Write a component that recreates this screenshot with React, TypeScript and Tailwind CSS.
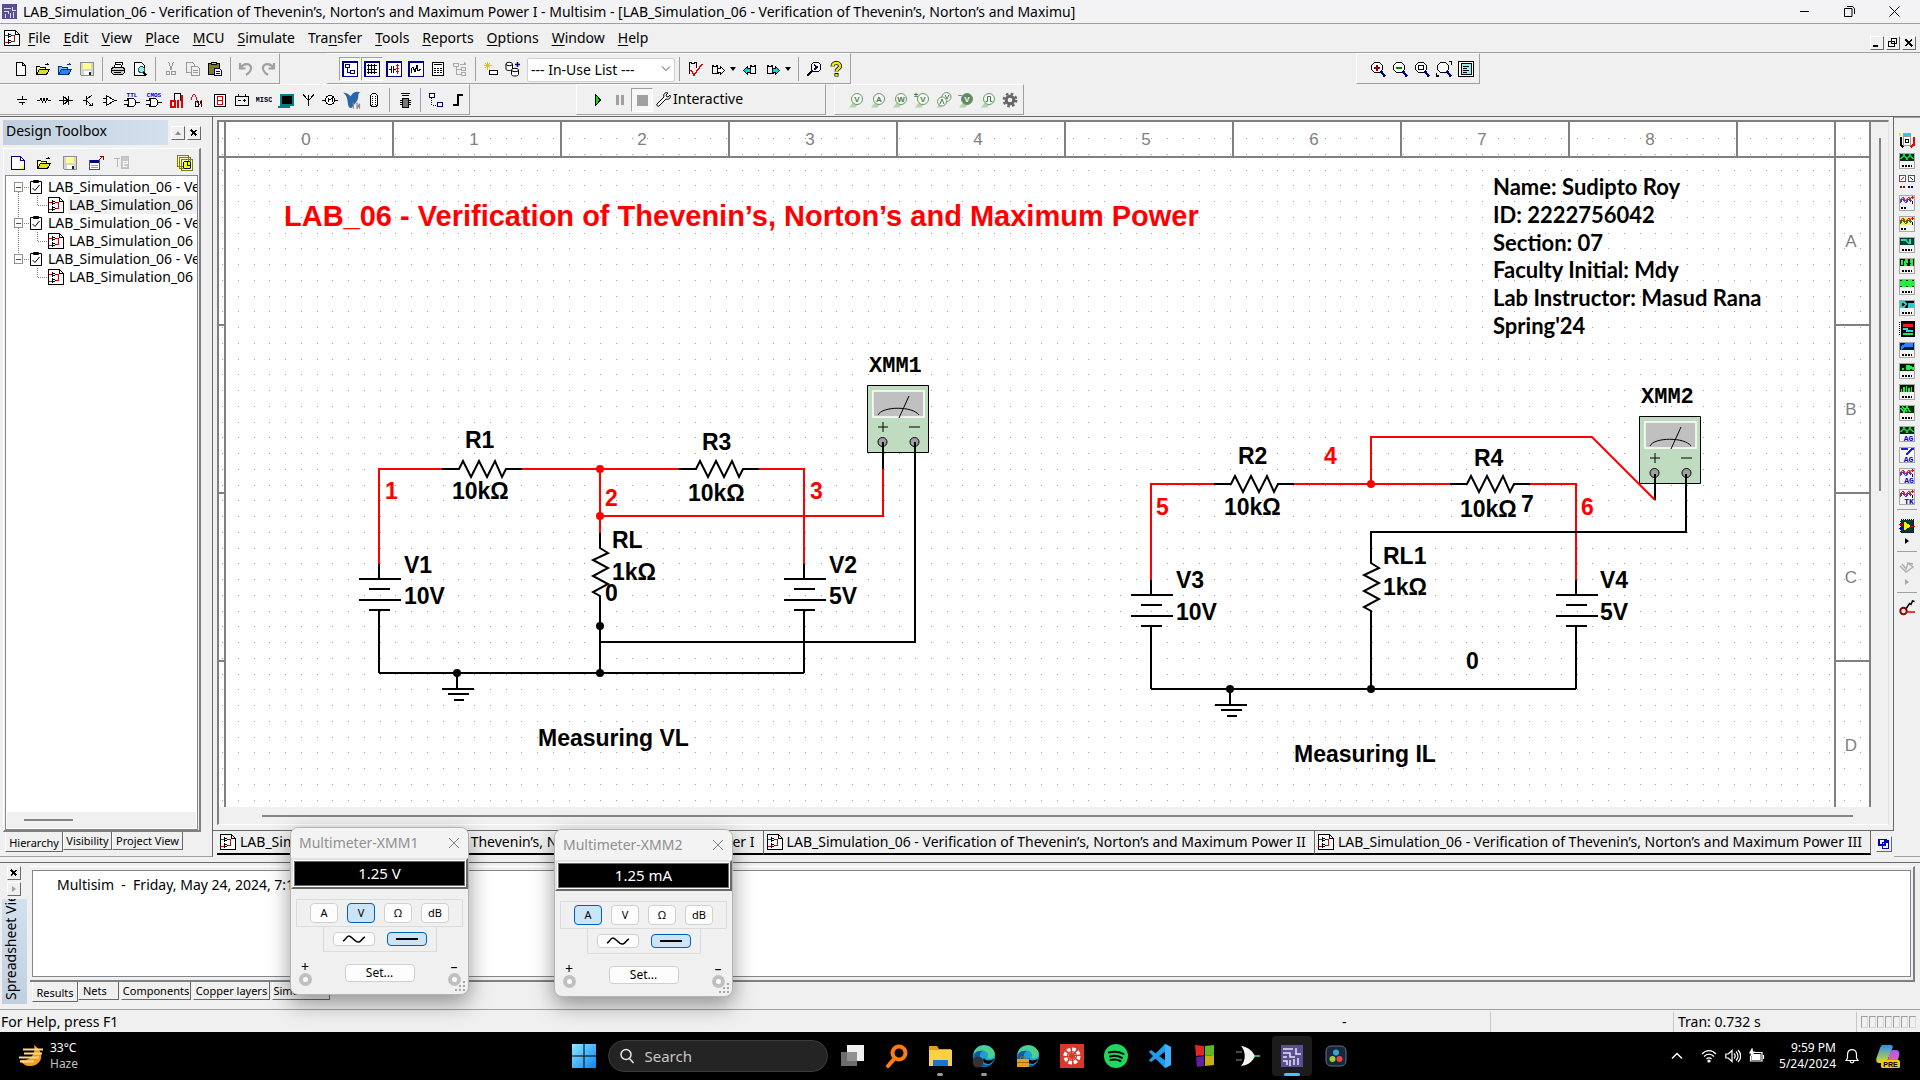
import React from "react";
import type { ReactNode } from "react";

type IconProps = { children: ReactNode; size?: string; smooth?: boolean };

function Ic({ children, size = "size-4", smooth = false }: IconProps) {
  return (
    <svg
      viewBox="0 0 16 16"
      className={`${size} shrink-0`}
      fill="none"
      stroke="#000"
      shapeRendering={smooth ? "auto" : "crispEdges"}
      aria-hidden="true"
    >
      {children}
    </svg>
  );
}

type Glyph = [string, ReactNode];

/* ---------- standard toolbar ---------- */

const fileGroup: Glyph[] = [
  ["New", <Ic><path d="M3.5 1.5h6l3 3v10h-9zM9.5 1.5v3h3" fill="#fff" /></Ic>],
  ["Open", <Ic><path d="M1.5 13.5v-8h3l1 1h5v2" fill="#ffff80" /><path d="M1.5 13.5l3-5h10l-3 5z" fill="#dede20" /><path d="M9.5 3.5h3M12.5 2.5l2 2" /></Ic>],
  ["Open sample", <Ic><path d="M1.5 13.5v-8h3l1 1h5v2" fill="#7ab8ff" stroke="#00308f" /><path d="M1.5 13.5l3-5h10l-3 5z" fill="#2f80e8" stroke="#00308f" /><path d="M9.5 3.5h3M12.5 2.5l2 2" stroke="#00308f" /></Ic>],
  ["Save", <Ic><path d="M1.5 1.5h13v13h-12l-1-1z" fill="#d4d4d4" stroke="#8c8c8c" /><path d="M4 2h8v6H4z" fill="#ffff90" stroke="none" /><path d="M5 10h7v4H5z" fill="#fff" stroke="none" /><path d="M10 11h2v3h-2z" fill="#222" stroke="none" /></Ic>],
];
const printGroup: Glyph[] = [
  ["Print", <Ic><path d="M4.5 6.5l1-5h7l-1 5" fill="#fff" /><path d="M1.5 7.5l2-1h9l2 1v4l-2 2h-9l-2-2z" fill="#ccc" /><path d="M2 9.5h12M4 11.5h7M6 3.5h5" /><path d="M10 10h2v1h-2z" fill="#e0c000" stroke="none" /></Ic>],
  ["Print preview", <Ic><path d="M2.5 1.5h7l3 3v10h-10z" fill="#fff" /><circle cx="9.5" cy="8.5" r="3" fill="#8ee" stroke="#355" /><path d="M11.5 11l3 3.500" strokeWidth="2" /></Ic>],
];
const editGroup: Glyph[] = [
  ["Cut", <Ic><path d="M5.500 1l3 8M10.500 1l-3 8" stroke="#999" /><circle cx="5" cy="12" r="2" stroke="#999" /><circle cx="10.500" cy="12" r="2" stroke="#999" /></Ic>],
  ["Copy", <Ic><path d="M1.500 1.500h6l2 2v8h-8z" stroke="#999" fill="#eee" /><path d="M6.500 5.500h6l2 2v7h-8zM8 9.500h5M8 11.500h5" stroke="#999" fill="#eee" /></Ic>],
  ["Paste", <Ic><path d="M1.500 2.500h11v11h-11z" fill="#7a7a20" /><path d="M4.500 1.500h5v2h-5z" fill="#dd0" /><path d="M7.500 7.500h5l2 2v5h-7z" fill="#fff" stroke="#000080" /><path d="M9 10.500h4M9 12.500h4" stroke="#000080" /></Ic>],
];
const undoGroup: Glyph[] = [
  ["Undo", <Ic smooth><path d="M2 2v5.500h5.500M2.500 7c3-5 9-5 10.500-1 .8 4-2 6-5 8" stroke="#a0a0a0" strokeWidth="2.200" /></Ic>],
  ["Redo", <Ic smooth><path d="M14 2v5.500H8.500M13.500 7c-3-5-9-5-10.500-1-.8 4 2 6 5 8" stroke="#a0a0a0" strokeWidth="2.200" /></Ic>],
];
const navy = "#000080";
const frame = <path d="M.5.5h15v15H.5z" fill="#fff" stroke={navy} strokeWidth="2" />;
const viewGroup: Glyph[] = [
  ["Design toolbox", <Ic>{frame}<path d="M3.500 3.500h4v3h-4zM8.500 9.500h4v3h-4zM5.500 7v4h3" stroke={navy} /></Ic>],
  ["Spreadsheet view", <Ic>{frame}<path d="M3 4.500h10M3 8.500h10M3 11.500h10M4.500 3v10M7.500 3v10M10.500 3v10" /></Ic>],
  ["SPICE netlist", <Ic>{frame}<path d="M3 8.500h2M5.500 5v7M7.500 5v7M8 8.500h2" /><path d="M11.500 3v10M10 4.500h3M10 7.500h3M10 10.500h3" stroke="#e00000" /></Ic>],
  ["Grapher", <Ic>{frame}<path d="M3 12V8l2-2 2 5 2-7 1 6 3-2" /></Ic>],
  ["Postprocessor", <Ic><path d="M2.500 1.500h11v13h-11z" fill="#fff" /><path d="M4 3.500h8M4 7.500h2M7 7.500h2M10 7.500h2M4 9.500h2M7 9.500h2M10 9.500h2M4 11.500h2M7 11.500h2M10 11.500h2" strokeWidth="1.500" /></Ic>],
  ["Parent sheet", <Ic><path d="M1.500 2.500h5v3h-5zM9.500 6.500h4v3h-4zM9.500 11.500h4v3h-4zM4.500 6v7h5M4.500 8.500h5M8 3.500h4v-2l2 2" stroke="#aaa" /></Ic>],
];
const dbGroup: Glyph[] = [
  ["Component wizard", <Ic><path d="M4.500 1v8M1 4.500h8M2 2l5 5M7 2L2 7" stroke="#d8c800" /><path d="M6.500 9.500h8v4h-8z" fill="#fff" /></Ic>],
  ["Database manager", <Ic smooth><path d="M1 3v5c0 2 6.500 2 6.500 0V3" fill="#fff" /><ellipse cx="4.200" cy="3" rx="3.200" ry="1.700" fill="#fff" /><path d="M6.500 9v4.500c0 2 7 2 7 0V9" fill="#fff" /><ellipse cx="10" cy="9" rx="3.500" ry="1.700" fill="#fff" /><path d="M10 3.500h5M12.500 1v5" stroke={navy} strokeWidth="1.500" /></Ic>],
];

const Caret = () => (
  <svg viewBox="0 0 6 4" className="h-1 w-1.5 shrink-0" aria-hidden="true"><path d="M0 0h6L3 4z" /></svg>
);
const Bars = ({ c = "#fff", flip = false }: { c?: string; flip?: boolean }) => (
  <Ic>
    <g transform={flip ? "translate(16 0) scale(-1 1)" : undefined}>
      <path d="M2.500 12.500v-8h1v1h3v-1h1v3" />
      <path d="M2.500 12.500h6" />
      <path d="M7.500 7.500h3v-2l4 4-4 4v-2h-3z" fill={c} />
    </g>
  </Ic>
);

/* ---------- component toolbar ---------- */

const IcText = ({ t, c = "#0000d8" }: { t: string; c?: string }) => (
  <text x="8" y="5" fontSize="6" fontWeight="700" textAnchor="middle" fill={c} stroke="none" fontFamily="Liberation Mono, monospace">{t}</text>
);
const gate = <path d="M3.500 6.500h4c6 0 6 8 0 8h-4c2-3 2-5 0-8zM0 8.500h4M0 12.500h4M12 10.500h4" fill="#fff" />;
const parts: Glyph[] = [
  ["Source", <Ic><path d="M3 7.500h10M5 10.500h6M8.500 4v3M8.500 11v2" /></Ic>],
  ["Basic", <Ic><path d="M1 8h3l1-2 1.500 4L8 6l1.500 4L11 6l1 2h3" /></Ic>],
  ["Diode", <Ic><path d="M1 8.500h14M5.500 4.500v8l5-4zM10.500 4v9" /></Ic>],
  ["Transistor", <Ic><path d="M3 8.500h3M6.500 4v9M7 7l5-4M7 9l5 5M9 13.500h3v-3" /></Ic>],
  ["Analog", <Ic><path d="M4.500 3.500v10l8-5zM1 6.500h3M1 10.500h3M12 8.500h3" fill="#fff" /></Ic>],
  ["TTL", <Ic>{gate}<IcText t="TTL" /></Ic>],
  ["CMOS", <Ic>{gate}<IcText t="CMOS" /></Ic>],
  ["Misc digital", <Ic><path d="M6.500 9V1.500h6V9" /><path d="M2.500 8.500h4v6h-4zM9.500 8v8M13.500 3v13" stroke="#e00000" strokeWidth="2" /></Ic>],
  ["Mixed", <Ic><path d="M1 8c2-8 4-8 6 0s4 4 5 0" stroke="#e00000" /><path d="M5.500 9.500h3v5h-3zM11.500 9v6M10 10.500l1.500-1.500" strokeWidth="1.500" /></Ic>],
  ["Indicator", <Ic><path d="M2.500 2.500h11v12h-11z" fill="#fff" /><path d="M5.500 4.500h5v4h-5zM5.500 8.500h5v4h-5z" stroke="#e00000" strokeWidth="1.500" /></Ic>],
  ["Power", <Ic><path d="M1.500 4.500h13v9h-13zM4.500 2v2M11.500 2v2M4 8.500h3M9 8.500h3M10.500 7v3" /></Ic>],
  ["Miscellaneous", <Ic><text x="8" y="10" fontSize="7" fontWeight="700" textAnchor="middle" fill="#000" stroke="none" fontFamily="Liberation Mono, monospace">MISC</text></Ic>],
  ["Advanced peripherals", <Ic><path d="M2.500 2.500h12v10h-12z" fill="#000" stroke="#008080" strokeWidth="2" /><path d="M0 14.500h12" stroke="#008080" strokeWidth="2" /></Ic>],
  ["RF", <Ic><path d="M8.500 14V3M3 2.500l5.500 6L14 2.500" strokeWidth="1" /></Ic>],
  ["Electromechanical", <Ic><circle cx="8" cy="8" r="4.500" fill="#fff" /><path d="M6 10V6l2 2 2-2v4M0 8.500h3M13 8.500h3" /></Ic>],
  ["NI component", <Ic size="size-5" smooth><path d="M1 2c3 0 5 2 6 3 2-4 5-4 8-3-2 0-2 2-2 4-1 4-3 5-5 8-1 1-3 0-3-2-1-4 0-6-4-10z" fill="#2a66a8" stroke="none" /><path d="M9 10v5M12 10v5l2-4v4" stroke="#888" /></Ic>],
  ["Connector", <Ic><rect x="4.500" y="1.500" width="7" height="13" rx="3" fill="#fff" /><path d="M6.500 4v9M9.500 4v9" strokeDasharray="1 1" /></Ic>],
];
const mcuGroup: Glyph[] = [
  ["MCU", <Ic><path d="M4 1.500h9M5 3.500h7" strokeWidth="1.500" /><path d="M5.500 6.500h6v9h-6z" fill="#777" /><path d="M3 8.500h2M3 10.500h2M3 12.500h2M12 8.500h2M12 10.500h2M12 12.500h2" /></Ic>],
];
const busGroup: Glyph[] = [
  ["Hierarchical block", <Ic><path d="M1.500 1.500h5v4h-5zM9.500 10.500h5v4h-5z" fill="#fff" stroke={navy} strokeWidth="1.500" /><path d="M3.500 6v7h6" strokeDasharray="1 1" /></Ic>],
  ["Bus", <Ic><path d="M3 13h5V3h5" strokeWidth="2" /></Ic>],
];

/* ---------- probes and zoom ---------- */

const Probe = ({ t, pre, solid }: { t: string; pre?: string; solid?: boolean }) => (
  <Ic smooth>
    <path d="M6 9l-5 6.500h6.500l2-3z" fill="#b4d4ae" stroke="none" />
    <circle cx="9" cy="7" r="5.500" fill={solid ? "#5f8a5f" : "#f4f8f4"} stroke="#6d956d" />
    <text x="9" y="10" fontSize="8" fontWeight="700" textAnchor="middle" fill={solid ? "#fff" : "#4d7a4d"} stroke="none" fontFamily="Liberation Sans, sans-serif">{t}</text>
    {pre && <text x="2" y="5" fontSize="8" fontWeight="700" textAnchor="middle" fill="#4d7a4d" stroke="none" fontFamily="Liberation Sans, sans-serif">{pre}</text>}
  </Ic>
);
const probes: Glyph[] = [
  ["Voltage probe", <Probe t="V" />],
  ["Current probe", <Probe t="A" />],
  ["Power probe", <Probe t="W" />],
  ["Differential probe", <Probe t="V" pre="±" />],
  ["Voltage and current probe", <Ic smooth><path d="M3 11l-2 4.500h5z" fill="#b4d4ae" stroke="none" /><circle cx="10.500" cy="5" r="4.500" fill="#f4f8f4" stroke="#6d956d" /><circle cx="6" cy="9.500" r="4.500" fill="#f4f8f4" stroke="#6d956d" /><path d="M4 12l2-5 2 5M9 3l2 4 2-4" stroke="#4d7a4d" /></Ic>],
  ["Reference probe", <Probe t="V" pre="–" solid />],
  ["Digital probe", <Ic smooth><path d="M6 9l-5 6.500h6.500l2-3z" fill="#b4d4ae" stroke="none" /><circle cx="9" cy="7" r="5.500" fill="#f4f8f4" stroke="#6d956d" /><path d="M5.500 9.500h2v-5h3v5h2" stroke="#4d7a4d" /></Ic>],
  ["Probe settings", <Ic smooth><circle cx="8" cy="8" r="3.800" stroke="#666" strokeWidth="3" /><circle cx="8" cy="8" r="6.200" stroke="#666" strokeWidth="2.400" strokeDasharray="2.500 2.370" /></Ic>],
];
const lens = (
  <>
    <circle cx="7" cy="6.500" r="5.500" fill="#fff" />
    <path d="M11 10.500l4 5" stroke={navy} strokeWidth="2.500" />
  </>
);
const zooms: Glyph[] = [
  ["Zoom in", <Ic>{lens}<path d="M4 6.500h6M7 3.500v6" stroke="#900000" strokeWidth="2" /></Ic>],
  ["Zoom out", <Ic>{lens}<path d="M4 6.500h6" stroke="#008000" strokeWidth="2" /></Ic>],
  ["Zoom area", <Ic>{lens}<path d="M4.500 4.500h5v4h-5z" /></Ic>],
  ["Zoom sheet", <Ic>{lens}<path d="M13 .500h2.500v3M.500 12v3H3" strokeWidth="1.500" /></Ic>],
  ["Full screen", <Ic><path d="M.500.500h15v15H.500z" fill="#fff" strokeWidth="1.500" /><path d="M3 2.500h10v11H3z" fill="#8ef0f0" /><path d="M5 5.500h6M5 7.500h4M5 9.500h6M5 11.500h4" /></Ic>],
];

/* ---------- shared pieces ---------- */

const Sep = () => <span className="mx-1 h-6 w-px shrink-0 bg-[#a0a0a0]" />;

function Tools({ items, pressed = 0 }: { items: Glyph[]; pressed?: number }) {
  return (
    <>
      {items.map(([name, icon], i) => (
        <button
          key={name}
          type="button"
          aria-label={name}
          className={`flex h-6 w-[22px] shrink-0 items-center justify-center ${
            i < pressed ? "border border-t-[#a0a0a0] border-l-[#a0a0a0] border-r-white border-b-white bg-[#f7f7f7]" : ""
          }`}
        >
          {icon}
        </button>
      ))}
    </>
  );
}

const bar = "flex h-[31px] shrink-0 items-center border-t border-r border-b border-t-white border-r-[#a0a0a0] border-b-[#a0a0a0]";
const raised = "border border-t-white border-l-white border-r-[#696969] border-b-[#696969] bg-[#f0f0f0]";

const SheetIcon = () => (
  <Ic>
    <path d="M.500.500h11l4 4v11H.500z" fill="#fff" />
    <path d="M11.500.500v4h4M4.500 3.500v4l3-2z" />
    <path d="M1 5.500h3M8 5.500h2.500v6M1 12.500h3v-2M7 11.500h3" stroke="#e00000" />
    <path d="M4.500 9.500v4l3-2z" />
  </Ic>
);

/* ---------- schematic ---------- */

const W = ({ d, red = false }: { d: string; red?: boolean }) => (
  <path d={d} fill="none" stroke={red ? "#ff0000" : "#000"} strokeWidth="2" />
);
const Dot = ({ x, y, red = false }: { x: number; y: number; red?: boolean }) => (
  <circle cx={x} cy={y} r="4" fill={red ? "#ff0000" : "#000"} />
);
const T = ({ x, y, children, red = false }: { x: number; y: number; children: ReactNode; red?: boolean }) => (
  <text x={x} y={y} fontSize="23" fontWeight="700" fill={red ? "#ff0000" : "#000"} fontFamily="Liberation Sans, sans-serif">
    {children}
  </text>
);
const HRes = ({ x, y }: { x: number; y: number }) => (
  <W d={`M${x} ${y}h17l4-8l8 16l8-16l8 16l8-16l7 16l4-8h16`} />
);
const VRes = ({ x, y }: { x: number; y: number }) => (
  <W d={`M${x} ${y}v15l8 5l-15 7l15 8l-15 8l15 8l-15 8l7 4v17`} />
);
const Battery = ({ x, y }: { x: number; y: number }) => (
  <W d={`M${x} ${y}v15m-20 0h42m-32 10h21m-31 11h42m-32 10h21m-11 0v63`} />
);
const Ground = ({ x, y }: { x: number; y: number }) => (
  <>
    <W d={`M${x} ${y}v16m-15 0h32m-26 5h21m-15 6h10`} />
    <Dot x={x} y={y} />
  </>
);
const Meter = ({ x, y, name }: { x: number; y: number; name: string }) => (
  <g transform={`translate(${x} ${y})`}>
    <text x="2" y="-13" fontSize="22" fontWeight="700" fontFamily="Liberation Mono, monospace">{name}</text>
    <path d="M.5.5h61v67H.5z" fill="#c0dcc0" stroke="#000" />
    <path d="M6 6h51v26H6z" fill="#c0c0c0" stroke="#fff" strokeWidth="1.500" />
    <path d="M11 30c4-9 35-9 41 0M42 11l-10 22M11 42h10M16 37v10M42 42h11" fill="none" stroke="#000" />
    <circle cx="15.500" cy="57" r="4.500" fill="#a0a0a4" stroke="#000" />
    <circle cx="47.500" cy="57" r="4.500" fill="#a0a0a4" stroke="#000" />
  </g>
);

const gridDots = (() => {
  let d = "";
  for (let r = 0; r < 43; r++)
    for (let c = 0; c < 105; c++) d += `M${Math.round(222 + c * 15.75)} ${Math.round(138 + r * 15.75)}h1v1h-1z`;
  return d;
})();
const colTicks = [393, 561, 729, 897, 1065, 1233, 1401, 1569, 1737];
const rowTicks = [325, 493, 661];
const info = ["Name: Sudipto Roy", "ID: 2222756042", "Section: 07", "Faculty Initial: Mdy", "Lab Instructor: Masud Rana", "Spring'24"];

function Schematic() {
  return (
    <svg className="absolute inset-0 size-full" role="img" aria-label="Circuit schematic">
      <g transform="translate(-219 -122)">
        <path d={gridDots} fill="#a0a0a0" shapeRendering="crispEdges" />
        <g stroke="#808080" strokeWidth="2" fill="none" shapeRendering="crispEdges">
          <path d="M225 122V808M219 157H1870M1835 122V808" />
          <path d="M1870 122V808" strokeWidth="3" />
          {colTicks.map((x) => <path key={x} d={`M${x} 122V157`} />)}
          {rowTicks.map((y) => <path key={y} d={`M219 ${y}h6M1835 ${y}h35`} />)}
        </g>
        <g fontSize="17" fill="#808080" textAnchor="middle" fontFamily="Liberation Sans, sans-serif">
          {[0, 1, 2, 3, 4, 5, 6, 7, 8].map((n) => <text key={n} x={306 + n * 168} y="145">{n}</text>)}
          {["A", "B", "C", "D"].map((n, i) => <text key={n} x="1851" y={247 + i * 168}>{n}</text>)}
        </g>

        <text x="284" y="226" fontSize="29" fontWeight="700" fill="#ff0000" fontFamily="Liberation Sans, sans-serif">
          LAB_06 - Verification of Thevenin’s, Norton’s and Maximum Power
        </text>
        <g fontSize="22" fontWeight="700" fontFamily="Lato, sans-serif">
          {info.map((line, i) => <text key={line} x="1493" y={195 + Math.round(i * 27.8)}>{line}</text>)}
        </g>

        <g shapeRendering="geometricPrecision">
          <W red d="M379 565V469H442M522 469H679M758 469H804V565" />
          <W red d="M600 469V533M600 516H883V469" />
          <HRes x={442} y={469} />
          <HRes x={679} y={469} />
          <VRes x={600} y={533} />
          <Battery x={379} y={564} />
          <Battery x={804} y={564} />
          <W d="M379 673H804M600 610V673M600 642H915V442" />
          <Ground x={457} y={673} />
          <Dot red x={600} y={469} />
          <Dot red x={600} y={516} />
          <Dot x={600} y={626} />
          <Dot x={600} y={673} />
          <Meter x={867} y={385} name="XMM1" />
          <W d="M883 442V469M915 442V460" />
        </g>
        <T x={465} y={448}>R1</T>
        <T x={452} y={499}>10kΩ</T>
        <T red x={385} y={499}>1</T>
        <T x={702} y={450}>R3</T>
        <T x={688} y={501}>10kΩ</T>
        <T red x={605} y={506}>2</T>
        <T red x={810} y={499}>3</T>
        <T x={612} y={548}>RL</T>
        <T x={612} y={580}>1kΩ</T>
        <T x={605} y={601}>0</T>
        <T x={404} y={573}>V1</T>
        <T x={404} y={604}>10V</T>
        <T x={829} y={573}>V2</T>
        <T x={829} y={604}>5V</T>
        <T x={538} y={746}>Measuring VL</T>

        <g shapeRendering="geometricPrecision">
          <W red d="M1151 580V484H1215M1293 484H1451M1529 484H1576V580" />
          <W d="M1686 474V532H1371V549" />
          <HRes x={1214} y={484} />
          <HRes x={1450} y={484} />
          <VRes x={1371} y={548} />
          <Battery x={1151} y={580} />
          <Battery x={1576} y={580} />
          <W d="M1151 689H1576M1371 626V689" />
          <Ground x={1230} y={689} />
          <Dot x={1371} y={689} />
          <Meter x={1639} y={416} name="XMM2" />
          <W d="M1655 474V500M1686 474V532" />
          <W red d="M1371 484V437H1592L1655 500" />
          <Dot red x={1371} y={484} />
        </g>
        <T x={1238} y={464}>R2</T>
        <T x={1224} y={515}>10kΩ</T>
        <T red x={1324} y={464}>4</T>
        <T red x={1156} y={515}>5</T>
        <T x={1474} y={466}>R4</T>
        <T x={1460} y={517}>10kΩ</T>
        <T x={1521} y={512}>7</T>
        <T red x={1581} y={515}>6</T>
        <T x={1383} y={564}>RL1</T>
        <T x={1383} y={595}>1kΩ</T>
        <T x={1176} y={588}>V3</T>
        <T x={1176} y={620}>10V</T>
        <T x={1600} y={588}>V4</T>
        <T x={1600} y={620}>5V</T>
        <T x={1466} y={669}>0</T>
        <T x={1294} y={762}>Measuring IL</T>
      </g>
    </svg>
  );
}

/* ---------- instruments column ---------- */

function Instrument({ top, trace, kind, tag }: { top: string; trace: string; kind: string; tag?: string }) {
  return (
    <Ic>
      <path d="M.5.5h15v15H.5z" fill="#f4f4f4" stroke="#a8a8a8" />
      <path d="M1 1h14v7H1z" fill={top} stroke="none" />
      <path d={kind} stroke={trace} strokeWidth="1.500" />
      {tag ? (
        <text x="9.500" y="14.500" fontSize="8" fontWeight="700" textAnchor="middle" fill="#0000c8" stroke="none" fontFamily="Liberation Mono, monospace">{tag}</text>
      ) : (
        <path d="M3 12.500h10" strokeDasharray="2 1" strokeWidth="2" />
      )}
    </Ic>
  );
}
const wave = "M2 6l3-4 3 4 3-4 3 4";
const scopeWaves = "M1 6l3-4 3 4 3-4 3 4";
const Scope = ({ a, b, bg, tag }: { a: string; b: string; bg: string; tag?: string }) => (
  <Ic>
    <path d="M.5.5h15v15H.5z" fill="#f4f4f4" stroke="#a8a8a8" />
    <path d="M1 1h11v8H1z" fill={bg} stroke="none" />
    <path d={scopeWaves} stroke={a} />
    <path d="M1 8l3-4 3 4 3-4 2 3" stroke={b} />
    <path d="M12 2.500h3M13.500 1v3" stroke="#e00000" />
    <path d="M13.500 6v3" />
    {tag ? (
      <text x="10" y="15" fontSize="8" fontWeight="700" textAnchor="middle" fill="#0000c8" stroke="none" fontFamily="Liberation Mono, monospace">{tag}</text>
    ) : (
      <path d="M2 12.500h6" strokeDasharray="2 1" strokeWidth="2" />
    )}
  </Ic>
);
const instruments: Glyph[] = [
  ["Multimeter", <Ic><path d="M4 1h8v3H4z" fill="#20d0e0" stroke="none" /><path d="M4.500 4.500h7v9h-7z" fill="#fff" stroke="#999" /><circle cx="8" cy="9" r="2" /><path d="M1.500 5v8l3 2" strokeWidth="2" /><path d="M1 1v3" stroke="#ee0" strokeWidth="1.500" /><path d="M14.500 5v8l-3 2" stroke="#e00" strokeWidth="2" /></Ic>],
  ["Function generator", <Instrument top="#003018" trace="#20d040" kind={wave} />],
  ["Wattmeter", <Ic><path d="M.5 1.500h6v6h-6zM9.500 1.500h6v6h-6z" fill="#fff" stroke="#555" /><path d="M2 6l3-3" stroke="#e00000" /><path d="M11 3l3 3" stroke="#0000e0" /><path d="M1 12.500h6" stroke="#a00000" strokeDasharray="2 1" strokeWidth="2" /><path d="M9 12.500h6" stroke="#000080" strokeDasharray="2 1" strokeWidth="2" /></Ic>],
  ["Oscilloscope", <Scope a="#e02020" b="#3040e0" bg="#eef2ff" />],
  ["Four channel oscilloscope", <Scope a="#e02020" b="#108020" bg="#f4f470" />],
  ["Bode plotter", <Instrument top="#00403c" trace="#20e0a0" kind="M2 3h5l3 4M11 2v5" />],
  ["Frequency counter", <Instrument top="#000" trace="#20f040" kind="M3 2v5M6 2h2v2H6v3h2M11 2h2v5h-2M11 4h2" />],
  ["Word generator", <Instrument top="#002800" trace="#20f040" kind="M2 2v5M4 2h2v5H4zM8 2v5M10 2h2v5h-2zM14 2v5" />],
  ["Logic converter", <Instrument top="#000" trace="#20d0d0" kind="M2 2h3l2 2-2 3H2zM10 4h2v3h-2zM14 3v5" />],
  ["Logic analyzer", <Ic><path d="M2.500.500h13v15h-13z" fill="#100010" /><path d="M4 4h10" stroke="#f02020" strokeWidth="3" /><path d="M4 8h4v2h6" stroke="#20e0e0" strokeWidth="2" /><path d="M4 13h10" stroke="#20f040" strokeWidth="1.500" /><path d="M.500 1v14" strokeDasharray="1 1" /></Ic>],
  ["IV analyzer", <Instrument top="#002040" trace="#3080ff" kind="M2 7l4-3h8M2 5l5-3h7" />],
  ["Distortion analyzer", <Instrument top="#001800" trace="#20f040" kind="M3 6h2M8 3h2v3H8zM12 3v2h2v2" />],
  ["Spectrum analyzer", <Instrument top="#001800" trace="#20f040" kind="M2.500 5v3M5 3v5M7.500 2v6M10 4v4M12.500 3v5" />],
  ["Network analyzer", <Instrument top="#003000" trace="#20f040" kind="M2 3l3 4 3-5 3 5M3 2l5 4" />],
  ["Agilent generator", <Instrument top="#003018" trace="#20d040" kind={wave} tag="AG" />],
  ["Agilent multimeter", <Instrument top="#fff" trace="#2020e0" kind="M2 2h7M7 8l5-5M12 2h3" tag="AG" />],
  ["Agilent oscilloscope", <Scope a="#e02020" b="#3040e0" bg="#eef2ff" tag="AG" />],
  ["Tektronix oscilloscope", <Scope a="#e02020" b="#3040e0" bg="#eef2ff" tag="TK" />],
];

/* ---------- multimeter window ---------- */

function MeterWindow({ name, reading, mode, place }: { name: string; reading: string; mode: string; place: string }) {
  const on = "border-[#005fb8] bg-[#cce4f7]";
  const off = "border-[#d0d0d0] bg-[#fdfdfd]";
  return (
    <section className={`absolute flex h-[168px] w-[179px] flex-col rounded-lg border border-[#b4b4b4] bg-[#f0f0f0] shadow-[0_8px_22px_rgba(0,0,0,0.4)] ${place}`}>
      <header className="flex h-[30px] shrink-0 items-center justify-between rounded-t-lg bg-[#f3f3f3] pr-2 pl-2 text-sm text-[#8f8f8f]">
        <span>{name}</span>
        <button type="button" aria-label={`Close ${name}`}>
          <svg viewBox="0 0 12 12" className="size-3" stroke="#8a8a8a" fill="none"><path d="M1 1l10 10M11 1L1 11" /></svg>
        </button>
      </header>
      <div className="shrink-0 border-2 border-t-[#e3e3e3] border-l-[#e3e3e3] border-r-[#696969] border-b-[#696969] bg-white p-px">
        <div className="flex h-[25px] items-center justify-center border border-[#696969] bg-black text-[15px] text-white">{reading}</div>
      </div>
      <div className="mx-[5px] mt-[10px] flex h-7 shrink-0 items-center justify-center gap-[9px] border border-[#dcdcdc] text-[11px]">
        {["A", "V", "Ω", "dB"].map((m) => (
          <button key={m} type="button" className={`h-5 w-7 rounded border text-center leading-4 ${m === mode ? on : off}`}>{m}</button>
        ))}
      </div>
      <div className="flex h-[25px] w-[114px] shrink-0 items-center justify-center gap-3 self-center border border-t-0 border-[#dcdcdc]">
        <button type="button" aria-label="AC" className={`flex h-[14px] w-[42px] items-center justify-center rounded border ${off}`}>
          <svg viewBox="0 0 24 10" className="h-[10px] w-6" fill="none" stroke="#000" strokeWidth="1.500"><path d="M1 7c3-1 3-5 6-5s6 7 10 6c3-1 3-4 6-5" /></svg>
        </button>
        <button type="button" aria-label="DC" className={`flex h-[14px] w-10 items-center justify-center rounded border ${on}`}>
          <span className="h-0.5 w-[22px] bg-black" />
        </button>
      </div>
      <div className="flex grow items-center justify-between px-[6px] text-sm">
        <div className="flex w-4 flex-col items-center">
          <span className="leading-3">+</span>
          <span className="size-[13px] rounded-full border-4 border-[#c0c0c0] bg-white" />
        </div>
        <button type="button" className={`h-[18px] w-[70px] rounded border text-xs leading-3 ${off}`}>Set...</button>
        <div className="flex w-4 flex-col items-center">
          <span className="leading-3">–</span>
          <span className="size-[13px] rounded-full border-4 border-[#c0c0c0] bg-white" />
        </div>
      </div>
      <svg viewBox="0 0 11 11" className="absolute right-0.5 bottom-0.5 size-[11px]" fill="#a8a8a8" aria-hidden="true">
        <path d="M8 0h2v2H8zM4 4h2v2H4zM8 4h2v2H8zM0 8h2v2H0zM4 8h2v2H4zM8 8h2v2H8z" />
      </svg>
    </section>
  );
}

/* ---------- taskbar ---------- */

const edge = (
  <>
    <circle cx="12" cy="12" r="11" fill="#1a9fd8" />
    <path d="M2 8C5 0 18-1 22 7c3 6-3 9-7 7 3-4-1-8-6-7-4 0-7 2-7 5z" fill="#4fd08a" />
    <path d="M8 11c-2 7 4 12 11 9-4 4-14 4-17-4-2-7 4-10 9-9-2 1-3 2-3 4z" fill="#0f58a8" />
    <path d="M12 14c1 3 6 3 10 1-1 3-3 4-5 5-5 0-7-3-5-6z" fill="#000" />
  </>
);
const apps: { name: string; art: ReactNode; mark?: string }[] = [
  { name: "Task view", art: <><path d="M7 1h17v16H7z" fill="#f0f0f0" /><path d="M1 8h16v14H1z" fill="#808080" opacity=".85" /></> },
  { name: "Everything", art: <><circle cx="15" cy="9" r="6.500" fill="none" stroke="#ff7a10" strokeWidth="4" /><path d="M11 14l-7 8" stroke="#ff7a10" strokeWidth="4" strokeLinecap="round" /></> },
  { name: "File Explorer", art: <><path d="M1 2h8l2 3h12v17H1z" fill="#e0a010" /><path d="M1 6h23v16H1z" fill="#ffcf48" /><path d="M5 16h15v6H5z" fill="#1876c8" /></>, mark: "dot" },
  { name: "Edge", art: <>{edge}<circle cx="6" cy="18" r="5.500" fill="#333" /></>, mark: "dot" },
  { name: "Edge work", art: <>{edge}<path d="M1 15h12v8H1z" fill="#e8a020" /><path d="M4.500 15v-2h5v2M1 18.500h12" fill="none" stroke="#a06808" /></> },
  { name: "Canvas", art: <><path d="M0 0h24v24H0z" fill="#d8392b" /><circle cx="12" cy="12" r="6.800" fill="none" stroke="#fff" strokeWidth="3.500" strokeDasharray="3.600 1.740" /><circle cx="12" cy="12" r="3.500" fill="none" stroke="#fff" strokeDasharray="1 1.750" /></> },
  { name: "Spotify", art: <><circle cx="12" cy="12" r="12" fill="#1ed760" /><path d="M5 8.500c5-1.500 10-1 14.500 1.500M6 12.500c4-1.200 8-.8 12 1.300M6.500 16c4-1 7-.6 10 1" fill="none" stroke="#000" strokeWidth="2" strokeLinecap="round" /></> },
  { name: "Visual Studio Code", art: <><path d="M17 0l6 3v18l-6 3L2 9l-1-1.500L3 6l15 11V7L3 18l-2-1.500L2 15z" fill="#1f9cf0" /><path d="M17 0l6 3v18l-6 3z" fill="#40b0f8" /></> },
  { name: "Office suite", art: <><path d="M3 1l9 1v9l-8 1z" fill="#e02820" /><path d="M13 2l9-1v10l-9 1z" fill="#60b820" /><path d="M4 13l8-1v10l-7 1z" fill="#6020a0" /><path d="M13 12l9-1v10l-9 1z" fill="#c8b010" /></> },
  { name: "PSpice", art: <><path d="M5 2c8 1 12 6 14 10-2 5-6 9-14 10 5-6 5-14 0-20z" fill="#f4f4f4" /><path d="M0 8h6M0 16h6" stroke="#606060" strokeWidth="1.500" /><path d="M19 12h5" stroke="#30b050" strokeWidth="2" /></> },
  { name: "Multisim", art: <><path d="M1 1h22v22H1z" fill="#5a4f90" /><path d="M3 5h10M3 9h7v4h5M3 17h4v4M10 16v6M14 15v6M18 14v7M16 4v6h5M3 13h4" fill="none" stroke="#e8e4f8" strokeWidth="1.500" /></>, mark: "active" },
  { name: "DaVinci Resolve", art: <><rect x="2" y="2" width="20" height="20" rx="5" fill="#182838" stroke="#607080" /><circle cx="12" cy="8.500" r="3" fill="#30a8e0" /><circle cx="8.500" cy="15" r="3" fill="#a0d030" /><circle cx="15.500" cy="15" r="3" fill="#e84848" /></> },
];

const menus: [string, string, string][] = [
  ["", "F", "ile"], ["", "E", "dit"], ["", "V", "iew"], ["", "P", "lace"], ["", "M", "CU"], ["", "S", "imulate"],
  ["Tra", "n", "sfer"], ["", "T", "ools"], ["", "R", "eports"], ["", "O", "ptions"], ["", "W", "indow"], ["", "H", "elp"],
];
const doc = "LAB_Simulation_06 - Verification of Thevenin’s, Norton’s and Maximum Power ";

function Tree() {
  return (
    <ul className="grow overflow-hidden pt-0.5 text-sm leading-[18px] whitespace-nowrap">
      {[0, 1, 2].map((n) => (
        <li key={n}>
          <div className="flex h-[18px] items-center gap-[6px] pl-2">
            <svg viewBox="0 0 16 18" className="h-[18px] w-4 shrink-0" fill="none" shapeRendering="crispEdges">
              <path d="M.500 4.500h8v9h-8z" stroke="#919191" fill="#fff" />
              <path d="M2 9.500h5" stroke="#3050a0" />
              <path d="M10 9.500h6" stroke="#808080" strokeDasharray="1 1" />
              {n > 0 && <path d="M4.500 0v4" stroke="#808080" strokeDasharray="1 1" />}
              {n < 2 && <path d="M4.500 14v4" stroke="#808080" strokeDasharray="1 1" />}
            </svg>
            <svg viewBox="0 0 12 14" className="-ml-1.5 h-[14px] w-3 shrink-0" fill="#fff" stroke="#000">
              <path d="M.500 1.500h11v12H.500zM3.500.500h5v2h-5zM2.500 8l2.500 2.500L9.500 5" />
            </svg>
            <span>LAB_Simulation_06 - Verification</span>
          </div>
          <div className="flex h-[18px] items-center pl-2">
            <svg viewBox="0 0 34 18" className="h-[18px] w-[34px] shrink-0" fill="none" stroke="#808080" strokeDasharray="1 1" shapeRendering="crispEdges">
              <path d={n < 2 ? "M4.500 0v18M23.500 0v9.500h10" : "M23.500 0v9.500h10"} />
            </svg>
            <SheetIcon />
            <span className={`ml-1 w-full pl-px ${n === 0 ? "bg-[#f0f0f0]" : ""}`}>LAB_Simulation_06 - Verification</span>
          </div>
        </li>
      ))}
    </ul>
  );
}

const tabBox = "shrink-0 border border-t-0 border-l-white border-r-[#696969] border-b-[#696969]";

export default function App() {
  return (
    <div className="relative flex h-screen w-full flex-col overflow-hidden bg-[#f0f0f0] font-['Noto_Sans','Open_Sans',sans-serif] text-black">
      <header className="flex h-6 shrink-0 items-center border-b border-[#a0a0a0] bg-[#f3f3f5] pl-0.5 text-sm">
        <Ic size="size-[15px]"><path d="M.500.500h15v15H.500z" fill="#5a4f90" stroke="#5a4f90" /><path d="M2 4.500h8M2 7.500h5v3M9 10v5M12 9v6M4 11v4M11 3v4h4" stroke="#e8e4f8" /></Ic>
        <h1 className="ml-1.5">LAB_Simulation_06 - Verification of Thevenin’s, Norton’s and Maximum Power I - Multisim - [LAB_Simulation_06 - Verification of Thevenin’s, Norton’s and Maximu]</h1>
        <div className="ml-auto flex items-center gap-[34px] pr-5">
          <button type="button" aria-label="Minimize"><svg viewBox="0 0 11 11" className="size-[11px]" stroke="#000" fill="none"><path d="M1 5.500h9" /></svg></button>
          <button type="button" aria-label="Restore"><svg viewBox="0 0 11 11" className="size-[11px]" stroke="#000" fill="none"><path d="M.500 2.500h7.500v8H.500zM3 .500h5.500l2 2V8" /></svg></button>
          <button type="button" aria-label="Close"><svg viewBox="0 0 11 11" className="size-[11px]" stroke="#000" fill="none"><path d="M.500.500l10 10M10.500.500l-10 10" /></svg></button>
        </div>
      </header>

      <nav className="flex h-[29px] shrink-0 items-center border-b border-[#a0a0a0] pr-1 pl-1 text-sm" aria-label="Main menu">
        <SheetIcon />
        <div className="ml-2 flex gap-[13px]">
          {menus.map(([a, b, c]) => (
            <button key={a + b + c} type="button">{a}<u className="underline-offset-2">{b}</u>{c}</button>
          ))}
        </div>
        <div className="mt-auto mb-0.5 ml-auto flex gap-0.5">
          <button type="button" aria-label="Minimize sheet" className={`flex size-[14px] items-center justify-center ${raised}`}><Ic size="size-2.5"><path d="M2 13h8" strokeWidth="3" /></Ic></button>
          <button type="button" aria-label="Restore sheet" className={`flex size-[14px] items-center justify-center ${raised}`}><Ic size="size-2.5"><path d="M5 1h9v8H5zM1 6h9v8H1z" strokeWidth="2" /></Ic></button>
          <button type="button" aria-label="Close sheet" className={`flex size-[14px] items-center justify-center ${raised}`}><Ic size="size-2.5"><path d="M2 2l11 11M13 2L2 13" strokeWidth="3" /></Ic></button>
        </div>
      </nav>

      <div className="flex h-[31px] shrink-0">
        <div className={`${bar} w-[280px] pl-[10px]`}>
          <Tools items={fileGroup} /><Sep /><Tools items={printGroup} /><Sep /><Tools items={editGroup} /><Sep /><Tools items={undoGroup} />
        </div>
        <div className={`${bar} ml-[47px] w-[524px] pl-3`}>
          <Tools items={viewGroup} pressed={2} /><Sep /><Tools items={dbGroup} />
          <div className="relative ml-[3px] h-6 w-[148px] shrink-0">
            <select aria-label="In-use list" className="h-6 w-full appearance-none rounded-xs border border-[#d0d0d0] bg-white pl-[3px] text-sm leading-5">
              <option>--- In-Use List ---</option>
            </select>
            <svg viewBox="0 0 10 6" className="pointer-events-none absolute top-[9px] right-1 h-1.5 w-2.5" fill="none" stroke="#555"><path d="M1 .500l4 4 4-4" /></svg>
          </div>
          <Sep />
          <button type="button" aria-label="Electrical rules check" className="flex h-6 w-[22px] items-center justify-center"><Ic><path d="M2.500 12.500v-11h2v1h3v-1h2v5" /><path d="M4 9l3 5 8-11" stroke="#e80000" strokeWidth="1.500" /></Ic></button>
          <button type="button" aria-label="Transfer" className="flex h-6 w-[33px] items-center gap-1 pl-1"><Bars /><Caret /></button>
          <button type="button" aria-label="Back annotate" className="flex h-6 w-[22px] items-center justify-center"><Bars c="#00d8e8" flip /></button>
          <button type="button" aria-label="Forward annotate" className="flex h-6 w-[33px] items-center gap-1 pl-1"><Bars c="#00d8e8" /><Caret /></button>
          <Sep />
          <button type="button" aria-label="Find examples" className="flex h-6 w-[22px] items-center justify-center"><Ic><circle cx="10" cy="6" r="5" fill="#fff" /><path d="M6 10l-5 5" strokeWidth="2" /><path d="M8 4l3 2-3 3" stroke={navy} strokeWidth="1.500" /></Ic></button>
          <button type="button" aria-label="Help" className="flex h-6 w-[22px] items-center justify-center"><Ic smooth><path d="M4.500 5.500c0-5 8-4.500 7.500 0C11.500 8 8.500 7.500 8.500 10.500M8.500 12v3.500" strokeWidth="4" /><path d="M4.500 5.500c0-5 8-4.500 7.500 0C11.500 8 8.500 7.500 8.500 10.500M8.500 13v2" stroke="#f0e800" strokeWidth="2.500" /></Ic></button>
        </div>
        <div className={`${bar} ml-[505px] w-[124px] border-l border-l-white pl-[10px]`}><Tools items={zooms} /></div>
      </div>

      <div className="flex h-[33px] shrink-0 border-b border-[#696969]">
        <div className={`${bar} w-[470px] pl-[11px]`}>
          <Tools items={parts} /><Sep /><Tools items={mcuGroup} /><Sep /><Tools items={busGroup} />
        </div>
        <div className={`${bar} ml-[106px] w-[250px] border-l border-l-white pl-[10px]`}>
          <button type="button" aria-label="Run" className="flex h-6 w-[22px] items-center justify-center"><Ic><path d="M5.500 2.500v11l5-5.500z" fill="#00e800" /></Ic></button>
          <button type="button" aria-label="Pause" className="flex h-6 w-[22px] items-center justify-center"><Ic><path d="M5.500 3v10M10.500 3v10" stroke="#a0a0a0" strokeWidth="3" /></Ic></button>
          <button type="button" aria-label="Stop" className="flex h-6 w-[22px] items-center justify-center border border-t-[#a0a0a0] border-l-[#a0a0a0] border-r-white border-b-white bg-[#f7f7f7]"><span className="mt-0.5 size-[11px] bg-[#a0a0a0]" /></button>
          <button type="button" className="flex h-6 items-center gap-px pb-0.5 pl-[3px] text-sm leading-5">
            <Ic smooth><path d="M1 13l7-7c-1-3 1-5 4-4l-2 2 .5 1.500 1.500.5 2-2c1 3-1 5-4 4l-7 7c-1 .8-3-.8-2-2z" fill="#fff" /></Ic>
            Interactive
          </button>
        </div>
        <div className={`${bar} ml-2 w-[190px] border-l border-l-white pl-[10px]`}><Tools items={probes} /></div>
      </div>

      <main className="flex min-h-0 grow">
        <aside className="flex w-[213px] shrink-0 flex-col border-r border-b border-r-[#696969] border-b-[#a0a0a0] pt-[3px] pr-[11px] pb-[3px] pl-[3px]">
          <div className="flex h-[25px] shrink-0 items-center">
            <h2 className="flex h-full w-[165px] items-center bg-linear-to-r from-[#c2cfde] to-[#d3e1ef] pb-1 pl-[3px] text-sm">Design Toolbox</h2>
            <button type="button" aria-label="Pin" className={`ml-[3px] flex size-[14px] items-center justify-center ${raised}`}><svg viewBox="0 0 6 4" className="h-1 w-1.5 rotate-180" fill="#909090"><path d="M0 0h6L3 4z" /></svg></button>
            <button type="button" aria-label="Close toolbox" className={`ml-0.5 flex size-[14px] items-center justify-center ${raised}`}><Ic size="size-2.5"><path d="M3 3l9 9M12 3l-9 9" strokeWidth="2.500" /></Ic></button>
          </div>
          <div className="mt-[3px] flex min-h-0 grow flex-col border-t border-l border-r-2 border-b-2 border-t-white border-l-white border-r-[#808080] border-b-[#808080] px-px">
            <div className="flex h-[26px] shrink-0 items-center gap-[10px] pt-0.5 pl-[5px]">
              <button type="button" aria-label="New design"><Ic><path d="M1.500 1.500h9l4 4v9h-13zM10.500 1.500v4h4" fill="#fff" stroke={navy} /><path d="M10 14h4v-4z" fill="#ff0" stroke="none" /></Ic></button>
              <button type="button" aria-label="Open design">{fileGroup[1][1]}</button>
              <button type="button" aria-label="Save design">{fileGroup[3][1]}</button>
              <button type="button" aria-label="Close design"><Ic><path d="M1.500 5.500h10v9h-10z" fill="#fff" stroke="#555" /><path d="M2 6.500h9" stroke={navy} strokeWidth="3" /><path d="M3 10.500h7M3 12.500h7" stroke="#999" /><path d="M11 5l3-3M12 1.500h3v3" stroke="#900000" /></Ic></button>
              <button type="button" aria-label="Rename"><Ic><path d="M0 3.500h6M3.500 4v8" stroke="#b8b8b8" /><path d="M7.500 1.500h7v12h-7z" stroke="#c0c0c0" fill="#c8c8c8" /><path d="M9 8.500h4v-2H9v5h4" stroke="#fff" /></Ic></button>
              <button type="button" aria-label="Revisions" className="mr-[5px] ml-auto"><Ic><path d="M.500.500h11v11H.500zM2.500 2.500h11v11h-11zM4.500 4.500h11v11h-11z" fill="#f8f8c0" stroke="#808000" /><circle cx="10" cy="10" r="4" fill="#ff0" stroke={navy} /><path d="M10 7v3h3" /></Ic></button>
            </div>
            <div className="flex min-h-0 grow flex-col border border-[#828790] bg-white">
              <Tree />
              <div className="m-px flex h-4 shrink-0 items-center bg-[#f0f0f0] pl-[17px]"><span className="h-0.5 w-[49px] bg-[#858585]" /></div>
            </div>
          </div>
          <div className="flex h-[21px] shrink-0 items-start pl-0.5 text-[11px] leading-[17px]">
            <button type="button" className={`${tabBox} h-5 w-[58px] pt-0.5`}>Hierarchy</button>
            <button type="button" className={`${tabBox} h-[18px] w-[49px]`}>Visibility</button>
            <button type="button" className={`${tabBox} h-[18px] w-[71px]`}>Project View</button>
          </div>
        </aside>

        <div className="flex min-w-0 grow flex-col">
          <div className="flex min-h-0 grow flex-col border-r border-b border-[#696969] pt-[3px] pr-1 pb-[5px] pl-1">
            <div className="flex min-h-0 grow flex-col border-t-2 border-r border-b border-l-2 border-t-[#808080] border-r-[#e3e3e3] border-b-white border-l-[#808080]">
              <div className="flex min-h-0 grow">
                <div className="relative min-w-0 grow overflow-hidden bg-white"><Schematic /></div>
                <div className="flex w-[17px] shrink-0 justify-center pt-4"><span className="h-[353px] w-0.5 bg-[#858585]" /></div>
              </div>
              <div className="flex h-[17px] shrink-0 items-center pr-[35px] pl-[43px]"><span className="h-0.5 w-full bg-[#858585]" /></div>
            </div>
          </div>
          <div className="flex h-[26px] shrink-0 pl-1 text-sm whitespace-nowrap">
            {["I", "II", "III"].map((n) => (
              <button key={n} type="button" className="flex h-6 min-w-0 grow items-center gap-1 overflow-hidden border-r border-b-2 border-r-[#696969] border-b-black pl-[3px]">
                <SheetIcon />
                {doc + n}
              </button>
            ))}
            <button type="button" aria-label="Window list" className={`mt-[5px] mr-0.5 ml-[5px] flex size-4 shrink-0 items-center justify-center ${raised}`}>
              <Ic size="size-3"><path d="M1 2h8v7H1zM6 6h8v8H6zM11 1v3h4" stroke="#0000c0" strokeWidth="2" /></Ic>
            </button>
          </div>
        </div>

        <aside className="flex w-[26px] shrink-0 flex-col items-center border-t border-b border-t-[#a0a0a0] border-b-[#a0a0a0] pt-[11px]" aria-label="Instruments">
          {instruments.map(([name, icon]) => (
            <button key={name} type="button" aria-label={name} className="flex h-[21px] shrink-0 items-center">{icon}</button>
          ))}
          <span className="my-0.5 h-px w-5 shrink-0 bg-[#a0a0a0]" />
          <button type="button" aria-label="LabVIEW instruments" className="flex h-[38px] shrink-0 flex-col items-center justify-center gap-1">
            <Ic><path d="M1.500 1.500h13v13h-13z" fill="#003838" strokeDasharray="1 1" /><path d="M5 3.500v9l7-4.500z" fill="#ffee00" stroke="none" /><path d="M0 6.500h4" stroke="#e00" /><path d="M0 10.500h4" stroke="#00e" /><path d="M12 8h4" stroke="#e00" /></Ic>
            <svg viewBox="0 0 4 6" className="h-1.5 w-1"><path d="M0 0v6l4-3z" /></svg>
          </button>
          <span className="my-px h-px w-5 shrink-0 bg-[#a0a0a0]" />
          <button type="button" aria-label="NI ELVISmx" className="flex h-[38px] shrink-0 flex-col items-center justify-center gap-1">
            <Ic smooth><path d="M1 7l6 6 7-5-5-4-2 6-4-5M9 4l5 1" stroke="#b0b0b0" strokeWidth="1.500" /></Ic>
            <svg viewBox="0 0 4 6" className="h-1.5 w-1" fill="#a8a8a8"><path d="M0 0v6l4-3z" /></svg>
          </button>
          <span className="my-px h-px w-5 shrink-0 bg-[#a0a0a0]" />
          <button type="button" aria-label="Current clamp" className="mt-1.5 shrink-0">
            <Ic smooth><path d="M6.500 9.500l4-6 1.500 1 1.500-3.500 2 .5" strokeWidth="1.500" /><circle cx="4.500" cy="11" r="3.200" stroke="#900000" strokeWidth="2" /><path d="M7 12h9" stroke="#e00000" strokeWidth="1.500" /></Ic>
          </button>
        </aside>
      </main>

      <section className="mt-[5px] flex h-[148px] shrink-0 border-t border-b border-t-[#696969] border-b-[#a0a0a0] pt-[3px]">
        <div className="flex w-[30px] shrink-0 flex-col items-center pr-0.5">
          <button type="button" aria-label="Close spreadsheet" className={`flex size-[14px] shrink-0 items-center justify-center ${raised}`}><Ic size="size-2.5"><path d="M3 3l9 9M12 3l-9 9" strokeWidth="2.500" /></Ic></button>
          <button type="button" aria-label="Dock spreadsheet" className={`mt-0.5 flex size-[14px] shrink-0 items-center justify-center ${raised}`}><svg viewBox="0 0 4 6" className="h-1.5 w-1" fill="#a0a0a0"><path d="M0 0v6l4-3z" /></svg></button>
          <h2 className="mt-[3px] flex h-[105px] w-[25px] shrink-0 rotate-180 items-start overflow-hidden bg-linear-to-b from-[#c2cfde] to-[#d3e1ef] pt-1 text-sm leading-[18px] whitespace-nowrap [writing-mode:vertical-rl]">Spreadsheet View</h2>
        </div>
        <div className="flex min-w-0 grow flex-col pr-[5px]">
          <div className="h-[116px] border-t border-r-2 border-b-2 border-t-white border-r-[#808080] border-b-[#808080] pt-[3px] pr-0.5 pb-[3px] pl-0.5">
            <div className="h-full border border-[#828790] bg-white pt-1 pl-6 text-sm whitespace-pre">Multisim  -  Friday, May 24, 2024, 7:15:38 PM</div>
          </div>
          <div className="flex items-start pl-0.5 text-[11px] leading-[17px]">
            <button type="button" className={`${tabBox} h-5 w-[46px] pt-0.5`}>Results</button>
            <button type="button" className={`${tabBox} h-[18px] w-[41px] pl-1 text-left`}>Nets</button>
            <button type="button" className={`${tabBox} ml-0.5 h-[18px] w-[70px]`}>Components</button>
            <button type="button" className={`${tabBox} ml-0.5 h-[18px] w-[77px]`}>Copper layers</button>
            <button type="button" className={`${tabBox} ml-0.5 h-[18px] w-[58px]`}>Simulation</button>
          </div>
        </div>
      </section>

      <footer className="flex h-[22px] shrink-0 items-center pt-0.5 pl-px text-sm leading-5">
        <span className="grow">For Help, press F1</span>
        <span className="flex h-5 w-[148px] items-center">-</span>
        <span className="h-5 w-[183px] border-l border-[#c8c8c8]" />
        <span className="flex h-5 w-[183px] items-center border-l border-[#c8c8c8] pl-1">Tran: 0.732 s</span>
        <span className="flex h-5 w-[64px] items-center gap-px border-l border-[#c8c8c8] pl-1">
          {[0, 1, 2, 3, 4, 5, 6].map((n) => <span key={n} className="h-3 w-[7px] border border-t-[#a0a0a0] border-l-[#a0a0a0] border-r-[#d8d8d8] border-b-[#d8d8d8]" />)}
        </span>
      </footer>

      <div className="flex h-12 shrink-0 items-center bg-black text-white">
        <button type="button" className="flex flex-1 items-center gap-[7px] pl-[19px] text-left text-xs leading-4">
          <svg viewBox="0 0 24 24" className="size-6 shrink-0" aria-hidden="true">
            <path d="M15 1c8 5 10 14 3 19-6 4-14 2-17-4 10 1 16-5 14-15z" fill="#f59a20" />
            <path d="M4 5.500h20M5 9.500h18M0 13.500h20M1 17.500h14" stroke="#ffd98a" strokeWidth="2" />
          </svg>
          <span><span className="block">33°C</span><span className="block text-[#c0c0c0]">Haze</span></span>
        </button>
        <div className="flex shrink-0 items-center">
          <button type="button" aria-label="Start" className="flex h-10 w-11 items-center justify-center">
            <svg viewBox="0 0 24 24" className="size-6"><defs><linearGradient id="win" x1="0" y1="0" x2="1" y2="1"><stop offset="0" stopColor="#8fe8ff" /><stop offset="1" stopColor="#0a84f0" /></linearGradient></defs><path d="M0 0h11.500v11.500H0zM12.500 0H24v11.500H12.500zM0 12.500h11.500V24H0zM12.500 12.500H24V24H12.500z" fill="url(#win)" /></svg>
          </button>
          <label className="mx-0.5 flex h-8 w-[220px] items-center rounded-full border border-[#3c3c3c] bg-[#242424] pl-2.5">
            <svg viewBox="0 0 16 16" className="size-4 shrink-0" fill="none" stroke="#e8e8e8" strokeWidth="1.500"><circle cx="7" cy="6.500" r="5" /><path d="M10.500 10.500l4 4.500" /></svg>
            <input type="search" placeholder="Search" aria-label="Search" className="ml-2.5 w-40 bg-transparent text-[15px] text-white outline-none placeholder:text-[#c8c8c8]" />
          </label>
          {apps.map((a) => (
            <button
              key={a.name}
              type="button"
              aria-label={a.name}
              className={`mx-0.5 flex h-10 w-10 flex-col items-center rounded pt-2 ${a.mark === "active" ? "bg-[#1c1c1c]" : ""}`}
            >
              <svg viewBox="0 0 24 24" className="size-6 shrink-0">{a.art}</svg>
              {a.mark === "dot" && <span className="mt-[5px] h-[3px] w-1.5 rounded-full bg-[#9a9a9a]" />}
              {a.mark === "active" && <span className="mt-[5px] h-[3px] w-4 rounded-full bg-[#4cc2ff]" />}
            </button>
          ))}
        </div>
        <div className="flex flex-1 items-center justify-end pr-5">
          <button type="button" aria-label="Hidden icons" className="mr-[18px]"><svg viewBox="0 0 12 8" className="h-2 w-3" fill="none" stroke="#fff" strokeWidth="1.500"><path d="M1 6.500l5-5 5 5" /></svg></button>
          <button type="button" aria-label="Network, volume, battery" className="mr-[14px] flex gap-2">
            <svg viewBox="0 0 16 16" className="size-4" fill="none" stroke="#fff" strokeWidth="1.200"><path d="M1 6c4-4.500 10-4.500 14 0M3 8.500c3-3.300 7-3.300 10 0M5.500 11c1.500-1.600 3.500-1.600 5 0" /><circle cx="8" cy="13" r="1" fill="#fff" /></svg>
            <svg viewBox="0 0 16 16" className="size-4" fill="none" stroke="#fff" strokeWidth="1.200"><path d="M.800 6h2.500L7 2.500v11L3.300 10H.800zM9 5.500c1.500 1.500 1.500 3.500 0 5M11 3.500c2.600 2.600 2.600 6.400 0 9M13 2c3.500 3.600 3.500 8.400 0 12" /></svg>
            <svg viewBox="0 0 16 16" className="size-4" fill="none" stroke="#fff" strokeWidth="1.200"><path d="M4 4.500h9v8.500H1.500V8" /><path d="M4 6.500h7v5H3V9z" fill="#fff" /><path d="M14.500 7v4M3 1L.800 5h2L2 8l3-4H3.500z" fill="#fff" /></svg>
          </button>
          <button type="button" className="mr-2 text-right text-xs leading-4"><span className="block">9:59 PM</span><span className="block">5/24/2024</span></button>
          <button type="button" aria-label="Notifications" className="mr-4"><svg viewBox="0 0 16 16" className="size-4" fill="none" stroke="#fff" strokeWidth="1.200"><path d="M2 12.500l1.500-2.500V6.500c0-6.600 9-6.600 9 0V10l1.500 2.500zM6 13c.500 2.500 3.500 2.500 4 0" /></svg></button>
          <button type="button" aria-label="Copilot">
            <svg viewBox="0 0 24 24" className="size-6">
              <defs><linearGradient id="cp1" x1="0" y1="0" x2="0" y2="1"><stop offset="0" stopColor="#2b8cf0" /><stop offset="1" stopColor="#d8e020" /></linearGradient><linearGradient id="cp2" x1="0" y1="0" x2="0" y2="1"><stop offset="0" stopColor="#a060f8" /><stop offset="1" stopColor="#f86090" /></linearGradient></defs>
              <path d="M7 1h8c2 0 2 2 1.500 3L12 15c-1 3-2 4-4 4H3c-3 0-3-3-2.500-5L4 4c.800-2 1.500-3 3-3z" fill="url(#cp1)" />
              <path d="M17 6h3c3 0 4 3 3 6l-2 7H11l3-10c.600-2 1.500-3 3-3z" fill="url(#cp2)" />
              <rect x="5" y="16" width="19" height="8" rx="1.500" fill="#f8c800" />
              <text x="14.500" y="22.500" fontSize="7" fontWeight="700" textAnchor="middle" fontFamily="Liberation Sans, sans-serif">PRE</text>
            </svg>
          </button>
        </div>
      </div>

      <MeterWindow name="Multimeter-XMM1" reading="1.25 V" mode="V" place="top-[827px] left-[290px]" />
      <MeterWindow name="Multimeter-XMM2" reading="1.25 mA" mode="A" place="top-[829px] left-[554px]" />
    </div>
  );
}
